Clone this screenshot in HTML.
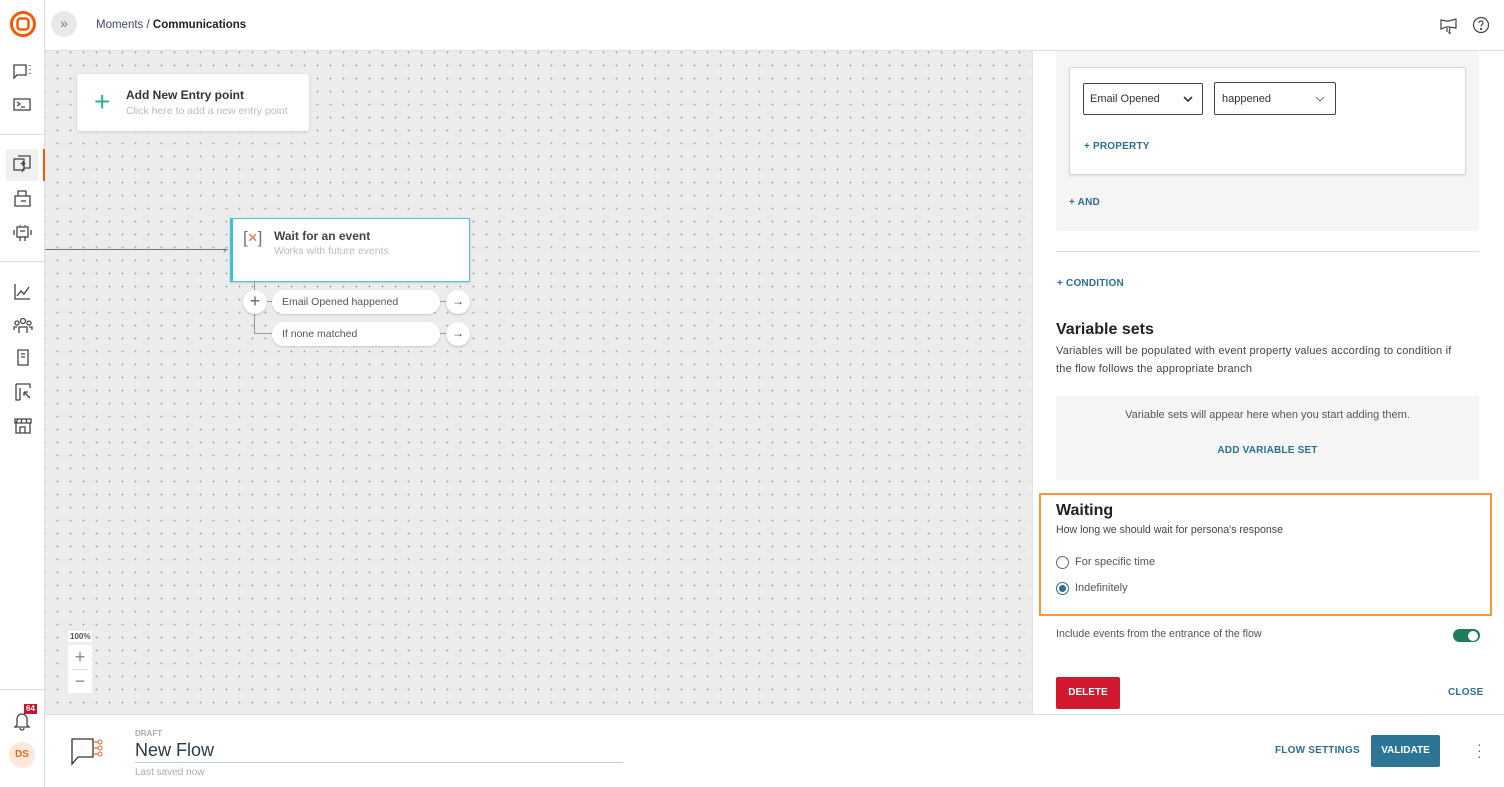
<!DOCTYPE html>
<html><head><meta charset="utf-8"><style>
*{box-sizing:border-box;margin:0;padding:0}
body{width:1504px;height:787px;overflow:hidden;font-family:"Liberation Sans",sans-serif;background:#fff;position:relative;color:#333}
.abs{position:absolute}
#side{left:0;top:0;width:45px;height:787px;border-right:1px solid #ddd;background:#fff}
#top{left:45px;top:0;width:1459px;height:51px;border-bottom:1px solid #ddd;background:#fff}
#canvas{left:45px;top:51px;width:987px;height:663px;background-color:#ececec;background-image:radial-gradient(circle,#a9a9a9 0.8px,transparent 1px);background-size:13px 13px;background-position:6px 8px}
#panel{left:1032px;top:51px;width:472px;height:663px;background:#fff;border-left:1px solid #e3e3e3}
#foot{left:45px;top:714px;width:1459px;height:73px;background:#fff;border-top:1px solid #e2e2e2}
.ic{position:absolute;left:12px}
.lbl{font-size:11px;font-weight:bold;color:#2c6f8f;letter-spacing:.2px}
</style></head><body>
<div id="side" class="abs">
 <svg class="abs" style="left:10px;top:11px" width="26" height="26" viewBox="0 0 26 26"><circle cx="13" cy="13" r="11.5" fill="none" stroke="#f25c05" stroke-width="3"/><rect x="7.5" y="7.5" width="11" height="11" rx="3" fill="none" stroke="#f25c05" stroke-width="2.5"/></svg>
 <svg class="ic" style="top:62px" width="22" height="20" viewBox="0 0 22 20" fill="none" stroke="#444" stroke-width="1.3"><path d="M2 3h12v10H5l-3 3z"/><path d="M18 3v1M18 7v1M18 11v1"/></svg>
 <svg class="ic" style="top:96px" width="22" height="18" viewBox="0 0 22 18" fill="none" stroke="#444" stroke-width="1.3"><rect x="2" y="3" width="16" height="11"/><path d="M5 6l3 2-3 2M9 11h4"/></svg>
 <div class="abs" style="left:0;top:134px;width:45px;border-top:1px solid #ddd"></div>
 <div class="abs" style="left:6px;top:149px;width:32px;height:32px;background:#f0f0f0"></div>
 <div class="abs" style="left:43px;top:149px;width:2px;height:32px;background:#f25c05"></div>
 <svg class="ic" style="top:154px" width="22" height="22" viewBox="0 0 22 22" fill="none" stroke="#444" stroke-width="1.3"><rect x="2" y="5" width="10" height="11"/><path d="M6 2h12v12h-6l-2 4"/><path d="M11 7v5M8.5 9.5h5"/></svg>
 <svg class="ic" style="top:188px" width="22" height="22" viewBox="0 0 22 22" fill="none" stroke="#444" stroke-width="1.3"><path d="M6 3h8v5H6zM3 8h15v10H3z"/><path d="M9 13h5"/></svg>
 <svg class="ic" style="top:222px" width="22" height="22" viewBox="0 0 22 22" fill="none" stroke="#444" stroke-width="1.3"><rect x="5" y="5" width="11" height="10"/><path d="M2 8v5M19 8v5M8 15v4M13 15v4M8 3v1M13 3v1M8 9h5"/></svg>
 <div class="abs" style="left:0;top:261px;width:45px;border-top:1px solid #ddd"></div>
 <svg class="ic" style="top:282px" width="22" height="20" viewBox="0 0 22 20" fill="none" stroke="#444" stroke-width="1.3"><path d="M3 2v15h15M5 14l4-5 3 3 5-7"/></svg>
 <svg class="ic" style="top:316px" width="22" height="20" viewBox="0 0 22 20" fill="none" stroke="#444" stroke-width="1.3"><circle cx="11" cy="5" r="2.5"/><circle cx="5" cy="7" r="2"/><circle cx="17" cy="7" r="2"/><path d="M7 17v-6h8v6M2 14v-3h3M20 14v-3h-3"/></svg>
 <svg class="ic" style="top:348px" width="22" height="20" viewBox="0 0 22 20" fill="none" stroke="#444" stroke-width="1.3"><path d="M6 2h10v15H6zM9 6h4M9 9h4M6 17h10"/></svg>
 <svg class="ic" style="top:382px" width="22" height="20" viewBox="0 0 22 20" fill="none" stroke="#444" stroke-width="1.3"><path d="M4 2h14v4M4 2v16h4M8 6v12M12 10l6 6M12 10h4M12 10v4"/></svg>
 <svg class="ic" style="top:416px" width="22" height="20" viewBox="0 0 22 20" fill="none" stroke="#444" stroke-width="1.3"><path d="M3 3h16v4H3zM4 7v10h14V7M8 17v-6h5v6M6 3l-2 4M10 3l-1 4M14 3l1 4"/></svg>
 <div class="abs" style="left:0;top:689px;width:45px;border-top:1px solid #ddd"></div>
 <svg class="abs" style="left:12px;top:709px" width="20" height="22" viewBox="0 0 20 22" fill="none" stroke="#444" stroke-width="1.3"><path d="M5 16V10a5 5 0 0110 0v6l2 2H3zM8 19a2 2 0 004 0"/></svg>
 <div class="abs" style="left:24px;top:704px;background:#d0112b;color:#fff;font-size:8px;font-weight:bold;padding:0 2px;line-height:10px">64</div>
 <div class="abs" style="left:9px;top:742px;width:26px;height:26px;border-radius:50%;background:#fde9d9;color:#f0662a;font-size:10px;font-weight:bold;text-align:center;line-height:26px">DS</div>
</div>
<div id="top" class="abs">
 <div class="abs" style="left:6px;top:11px;width:26px;height:26px;border-radius:50%;background:#e8e8e8;color:#777;font-size:14px;text-align:center;line-height:25px">»</div>
 <div class="abs" style="left:51px;top:19px;font-size:11.5px;line-height:13px;color:#3c4a5a">Moments / <b style="color:#222">Communications</b></div>
 <svg class="abs" style="left:1394px;top:16px" width="20" height="18" viewBox="0 0 20 18" fill="none" stroke="#444" stroke-width="1.2"><path d="M2 4v9l5-2h3l7 1V3l-7 2H7z"/><path d="M11 12l-1 5h2M8 12v4"/></svg>
 <svg class="abs" style="left:1427px;top:16px" width="18" height="18" viewBox="0 0 18 18" fill="none" stroke="#444" stroke-width="1.2"><circle cx="9" cy="9" r="7.5"/><path d="M7 7a2 2 0 114 0c0 1.5-2 1.5-2 3.5"/><circle cx="9" cy="13" r=".5"/></svg>
</div>
<div id="canvas" class="abs">
 <div class="abs" style="left:32px;top:23px;width:232px;height:57px;background:#fff;border-radius:3px;box-shadow:0 1px 3px rgba(0,0,0,.12)">
  <div class="abs" style="left:17px;top:16px;color:#2bb38c;font-size:28px;line-height:24px;font-weight:200">+</div>
  <div class="abs" style="left:49px;top:14px;font-size:12px;font-weight:bold;color:#333">Add New Entry point</div>
  <div class="abs" style="left:49px;top:31px;font-size:10.5px;color:#bbb">Click here to add a new entry point</div>
 </div>
 <div class="abs" style="left:0;top:198px;width:183px;border-top:1px solid #777"></div>
 <div class="abs" style="left:178px;top:194px;color:#555;font-size:10px">›</div>
 <div class="abs" style="left:185px;top:167px;width:240px;height:64px;background:#fff;border:1px solid #4cc3dc;border-left:3px solid #3cc0dc;box-shadow:0 1px 2px rgba(0,0,0,.15)">
  <div class="abs" style="left:10px;top:9px;font-size:17px;color:#6a7280">[<span style="color:#f26a3a">×</span>]</div>
  <div class="abs" style="left:41px;top:10px;font-size:12px;font-weight:bold;color:#444">Wait for an event</div>
  <div class="abs" style="left:41px;top:26px;font-size:10.5px;color:#bbb">Works with future events</div>
 </div>
 <div class="abs" style="left:209px;top:231px;width:1px;height:51px;background:#999"></div>
 <div class="abs" style="left:209px;top:282px;width:20px;height:1px;background:#999"></div>
 <div class="abs" style="left:198px;top:239px;width:24px;height:24px;border-radius:50%;background:#fff;box-shadow:0 1px 2px rgba(0,0,0,.2);text-align:center;line-height:22px;font-size:18px;color:#666">+</div>
 <div class="abs" style="left:222px;top:250px;width:6px;height:1px;background:#999"></div>
 <div class="abs" style="left:227px;top:239px;width:168px;height:24px;border-radius:12px;background:#fff;box-shadow:0 1px 2px rgba(0,0,0,.15);font-size:10.5px;color:#555;padding:6px 10px">Email Opened happened</div>
 <div class="abs" style="left:227px;top:271px;width:168px;height:24px;border-radius:12px;background:#fff;box-shadow:0 1px 2px rgba(0,0,0,.15);font-size:10.5px;color:#555;padding:6px 10px">If none matched</div>
 <div class="abs" style="left:395px;top:250px;width:6px;height:1px;background:#999"></div>
 <div class="abs" style="left:395px;top:282px;width:6px;height:1px;background:#999"></div>
 <div class="abs" style="left:401px;top:239px;width:24px;height:24px;border-radius:50%;background:#fff;box-shadow:0 1px 2px rgba(0,0,0,.2);text-align:center;line-height:23px;font-size:12px;color:#444">→</div>
 <div class="abs" style="left:401px;top:271px;width:24px;height:24px;border-radius:50%;background:#fff;box-shadow:0 1px 2px rgba(0,0,0,.2);text-align:center;line-height:23px;font-size:12px;color:#444">→</div>
 <div class="abs" style="left:23px;top:580px;background:#fff;font-size:8px;font-weight:bold;color:#555;padding:1px 2px">100%</div>
 <div class="abs" style="left:23px;top:594px;width:24px;height:48px;background:#fff;border-radius:2px">
  <div style="text-align:center;font-size:18px;color:#888;line-height:24px;font-weight:200">+</div>
  <div style="margin:0 4px;border-top:1px solid #ddd"></div>
  <div style="text-align:center;font-size:18px;color:#888;line-height:22px">−</div>
 </div>
</div>
<div id="panel" class="abs">
 <div class="abs" style="left:23px;top:0;width:423px;height:180px;background:#f5f5f5;border-radius:0 0 3px 3px"></div>
 <div class="abs" style="left:36px;top:16px;width:397px;height:108px;background:#fff;border:1px solid #cfdbe3;border-radius:2px;box-shadow:0 1px 2px rgba(0,0,0,.1)">
  <div class="abs" style="left:13px;top:15px;width:120px;height:32px;border:1px solid #444;border-radius:2px;font-size:11px;color:#333;padding:9px 6px">Email Opened<svg style="position:absolute;right:9px;top:12px" width="10" height="6" viewBox="0 0 10 6"><path d="M1 1l4 4 4-4" fill="none" stroke="#333" stroke-width="1.6"/></svg></div>
  <div class="abs" style="left:144px;top:14px;width:122px;height:33px;border:1px solid #444;border-radius:2px;font-size:11px;color:#333;padding:10px 7px">happened<svg style="position:absolute;right:10px;top:13px" width="10" height="6" viewBox="0 0 10 6"><path d="M1 1l4 4 4-4" fill="none" stroke="#777" stroke-width="1"/></svg></div>
  <div class="abs lbl" style="left:14px;top:73px;font-size:10px">+ PROPERTY</div>
 </div>
 <div class="abs lbl" style="left:36px;top:146px;font-size:10px">+ AND</div>
 <div class="abs" style="left:23px;top:200px;width:423px;border-top:1px solid #ddd"></div>
 <div class="abs lbl" style="left:24px;top:227px;font-size:10px">+ CONDITION</div>
 <div class="abs" style="left:23px;top:270px;font-size:16px;font-weight:bold;color:#222">Variable sets</div>
 <div class="abs" style="left:23px;top:291px;width:449px;font-size:11px;letter-spacing:.2px;color:#444;line-height:18px;white-space:nowrap">Variables will be populated with event property values according to condition if<br>the flow follows the appropriate branch</div>
 <div class="abs" style="left:23px;top:345px;width:423px;height:84px;background:#f5f5f5">
  <div class="abs" style="left:0;top:13px;width:423px;text-align:center;font-size:11px;color:#555">Variable sets will appear here when you start adding them.</div>
  <div class="abs lbl" style="left:0;top:49px;width:423px;text-align:center;font-size:10px">ADD VARIABLE SET</div>
 </div>
 <div class="abs" style="left:6px;top:442px;width:453px;height:123px;border:2px solid #f7973a"></div>
 <div class="abs" style="left:23px;top:451px;font-size:16px;font-weight:bold;color:#222">Waiting</div>
 <div class="abs" style="left:23px;top:473px;font-size:10.6px;color:#444">How long we should wait for persona's response</div>
 <div class="abs" style="left:23px;top:505px;width:13px;height:13px;border:1px solid #666;border-radius:50%"></div>
 <div class="abs" style="left:42px;top:505px;font-size:11px;color:#555">For specific time</div>
 <div class="abs" style="left:23px;top:531px;width:13px;height:13px;border:1px solid #2c6f8f;border-radius:50%"><div style="margin:2px;width:7px;height:7px;border-radius:50%;background:#2c6f8f"></div></div>
 <div class="abs" style="left:42px;top:531px;font-size:11px;color:#555">Indefinitely</div>
 <div class="abs" style="left:23px;top:577px;font-size:10.6px;color:#555">Include events from the entrance of the flow</div>
 <div class="abs" style="left:420px;top:578px;width:27px;height:13px;border-radius:7px;background:#1d7c5c"><div style="position:absolute;right:2px;top:1.5px;width:10px;height:10px;border-radius:50%;background:#fff"></div></div>
 <div class="abs" style="left:23px;top:626px;width:64px;height:32px;background:#d0192f;border-radius:2px;color:#fff;font-size:10px;font-weight:bold;text-align:center;line-height:32px">DELETE</div>
 <div class="abs lbl" style="left:415px;top:636px;font-size:10px">CLOSE</div>
</div>
<div id="foot" class="abs">
 <svg class="abs" style="left:24px;top:22px" width="40" height="32" viewBox="0 0 40 32" fill="none"><path d="M3 2h21v18H9l-6 7z" stroke="#333" stroke-width="1.3"/><path d="M24 5h5M24 11h5M24 17h5" stroke="#f0662a" stroke-width="1.2"/><circle cx="31" cy="5" r="2" stroke="#f0662a"/><circle cx="31" cy="11" r="2" stroke="#f0662a"/><circle cx="31" cy="17" r="2" stroke="#f0662a"/></svg>
 <div class="abs" style="left:90px;top:14px;font-size:8px;font-weight:bold;color:#aaa">DRAFT</div>
 <div class="abs" style="left:90px;top:25px;width:488px;height:23px;border-bottom:1px solid #b9cbd6;font-size:18px;color:#2a3a4a">New Flow</div>
 <div class="abs" style="left:90px;top:52px;font-size:10px;color:#aaa">Last saved now</div>
 <div class="abs lbl" style="left:1230px;top:30px;font-size:10px">FLOW SETTINGS</div>
 <div class="abs" style="left:1326px;top:20px;width:69px;height:32px;background:#2c7597;border-radius:2px;color:#fff;font-size:10px;font-weight:bold;text-align:center;line-height:32px">VALIDATE</div>
 <div class="abs" style="left:1432px;top:26px;width:3px;font-size:14px;color:#666;line-height:6px">·<br>·<br>·</div>
</div>
</body></html>
